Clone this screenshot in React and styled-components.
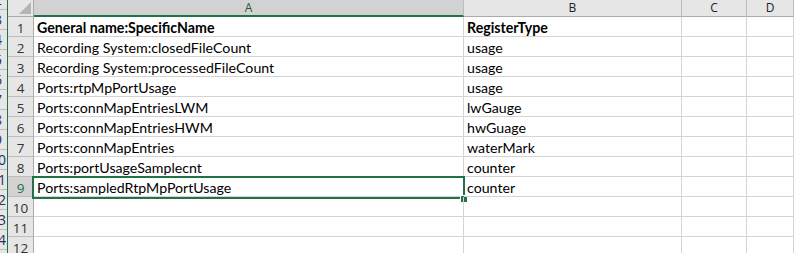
import React from "react";
import styled, { createGlobalStyle } from "styled-components";

const GlobalStyle = createGlobalStyle`
  html, body {
    margin: 0;
    padding: 0;
    background: #ffffff;
    overflow: hidden;
  }
`;

//styled/////////////
const StPage = styled.div`
  display: flex;
  width: 794px;
  height: 253px;
  overflow: hidden;
  background: #ffffff;
`;

const StStrip = styled.div`
  width: 7px;
  flex: none;
  overflow: hidden;
  border-right: 1px solid #217346;
  background: #e6e6e6;
`;

const StStripInner = styled.div`
  width: 26px;
  margin-left: -15px;
  margin-top: -10px;
`;

const StStripCell = styled.div`
  height: 19px;
  border-bottom: 1px solid #bdbdbd;
  display: flex;
  align-items: center;
  justify-content: center;
  font-family: "Open Sans", "Liberation Sans", sans-serif;
  font-size: 14px;
  color: #2a3357;
`;

const StSheet = styled.div`
  display: grid;
  grid-template-columns: 26px 430px 218px 65px 1fr;
  grid-auto-rows: 20px;
  grid-template-rows: 17px;
  flex: 1;
  align-content: start;
`;

const StCorner = styled.div`
  background: #e6e6e6;
  border-right: 1px solid #ababab;
  border-bottom: 1px solid #ababab;
  position: relative;
`;

const StColHead = styled.div`
  background: ${(p) => (p.$active ? "#d2d2d2" : "#e6e6e6")};
  border-right: 1px solid #bdbdbd;
  border-bottom: ${(p) => (p.$active ? "2px solid #217346" : "1px solid #ababab")};
  display: flex;
  align-items: center;
  justify-content: center;
  font-family: "Open Sans", "Liberation Sans", sans-serif;
  font-size: 12px;
  line-height: 1;
  padding-bottom: ${(p) => (p.$active ? "0" : "1px")};
  color: ${(p) => (p.$active ? "#1f5a3a" : "#222")};
`;

const StRowHead = styled.div`
  background: ${(p) => (p.$active ? "#d2d2d2" : "#e6e6e6")};
  border-right: 1px solid #ababab;
  border-bottom: 1px solid #bdbdbd;
  display: flex;
  align-items: center;
  justify-content: center;
  font-family: "Open Sans", "Liberation Sans", sans-serif;
  font-size: 13.5px;
  padding-top: 2px;
  color: ${(p) => (p.$active ? "#217346" : "#333")};
`;

const StCell = styled.div`
  position: relative;
  border-right: 1px solid #d4d4d4;
  border-bottom: 1px solid #d4d4d4;
  display: flex;
  align-items: flex-end;
  padding: 0 0 0 3px;
  font-family: Lato, "Liberation Sans", sans-serif;
  font-size: 14.2px;
  font-weight: ${(p) => (p.$bold ? 700 : 400)};
  color: #000;
  white-space: nowrap;
  line-height: 17px;
`;

const StSelection = styled.div`
  position: absolute;
  left: -2px;
  right: -2px;
  top: -1px;
  bottom: -3px;
  border: 2px solid #217346;
  pointer-events: none;
`;

const StHandle = styled.div`
  position: absolute;
  right: -4px;
  bottom: -5px;
  width: 6px;
  height: 6px;
  background: #217346;
  box-shadow: 0 0 0 1px #ffffff;
`;
////////////////////////////////

const rows = [
  ["General name:SpecificName", "RegisterType"],
  ["Recording System:closedFileCount", "usage"],
  ["Recording System:processedFileCount", "usage"],
  ["Ports:rtpMpPortUsage", "usage"],
  ["Ports:connMapEntriesLWM", "lwGauge"],
  ["Ports:connMapEntriesHWM", "hwGuage"],
  ["Ports:connMapEntries", "waterMark"],
  ["Ports:portUsageSamplecnt", "counter"],
  ["Ports:sampledRtpMpPortUsage", "counter"],
  ["", ""],
  ["", ""],
  ["", ""],
];

const stripNums = [2, 3, 4, 5, 6, 7, 8, 9, 10, 11, 12, 13, 14, 15];

const Corner = () => (
  <StCorner>
    <svg
      width="14"
      height="14"
      viewBox="0 0 14 14"
      style={{ position: "absolute", right: 1, bottom: 1 }}
    >
      <polygon points="13,1 13,13 1,13" fill="#b4b4b4" />
    </svg>
  </StCorner>
);

const App = () => {
  const selectedRow = 9;

  return (
    <>
      <GlobalStyle />
      <StPage>
        <StStrip>
          <StStripInner>
            {stripNums.map((n) => (
              <StStripCell key={n}>{n}</StStripCell>
            ))}
          </StStripInner>
        </StStrip>
        <StSheet>
          <Corner />
          <StColHead $active>A</StColHead>
          <StColHead>B</StColHead>
          <StColHead>C</StColHead>
          <StColHead>D</StColHead>
          {rows.map((r, i) => {
            const num = i + 1;
            const active = num === selectedRow;
            return (
              <React.Fragment key={num}>
                <StRowHead $active={active}>{num}</StRowHead>
                <StCell $bold={num === 1}>
                  {r[0]}
                  {active && (
                    <StSelection>
                      <StHandle />
                    </StSelection>
                  )}
                </StCell>
                <StCell $bold={num === 1}>{r[1]}</StCell>
                <StCell />
                <StCell />
              </React.Fragment>
            );
          })}
        </StSheet>
      </StPage>
    </>
  );
};

export default App;
